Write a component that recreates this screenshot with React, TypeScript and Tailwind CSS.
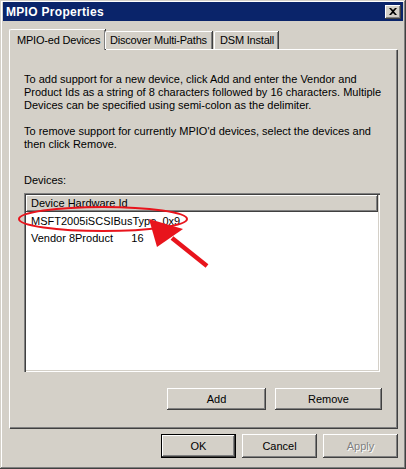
const raised = 'shadow-[inset_-1px_-1px_#404040,inset_1px_1px_#ffffff,inset_-2px_-2px_#808080]';

function Btn({ label, className = '', disabled = false, def = false }: { label: string; className?: string; disabled?: boolean; def?: boolean }) {
    return (
        <div className={`flex items-center justify-center bg-[#d4d0c8] ${def ? 'border border-black ' : ''}${className}`}>
            <div className={`w-full h-full flex items-center justify-center ${raised}`}>
                {disabled ? (
                    <span className="text-[#808080] [text-shadow:1px_1px_0_#ffffff]">{label}</span>
                ) : (
                    <span>{label}</span>
                )}
            </div>
        </div>
    );
}

export default function App() {
    return (
        <div className="w-[406px] h-[469px] bg-[#d4d0c8] relative text-[11px] text-black font-['Liberation_Sans',Arial,sans-serif] shadow-[inset_-1px_-1px_#404040,inset_1px_1px_#d4d0c8,inset_-2px_-2px_#808080,inset_2px_2px_#ffffff] pt-[2px] px-[3px] leading-none whitespace-nowrap">
            {/* Title bar */}
            <div className="h-[19px] bg-[#0a246a] flex items-center justify-between pl-[3px] pr-[2px]">
                <span className="text-white font-bold text-[12px] tracking-[0.3px]">MPIO Properties</span>
                <div className={`w-[16px] h-[14px] bg-[#d4d0c8] flex items-center justify-center ${raised}`}>
                    <svg width="8" height="7" viewBox="0 0 8 7">
                        <path d="M0 0h2l2 2 2-2h2L5 3.5 8 7H6L4 5 2 7H0l3-3.5z" fill="#000" />
                    </svg>
                </div>
            </div>

            <div className="px-[6px] pt-[8px]">
                {/* Tabs */}
                <div className="flex items-end h-[20px] relative z-10 tracking-[-0.2px]">
                    <div className="w-[96px] h-[21px] -mb-[1px] bg-[#d4d0c8] border-l border-t border-white rounded-tl-[2px] shadow-[inset_-1px_0_#808080,1px_0_#404040] flex items-start pl-[7px] pt-[5px]">
                        MPIO-ed Devices
                    </div>
                    <div className="w-[107px] h-[18px] border-l border-t border-white rounded-tl-[2px] shadow-[inset_-1px_0_#808080,1px_0_#404040] flex items-center pl-[4px]">
                        Discover Multi-Paths
                    </div>
                    <div className="w-[64px] ml-[2px] h-[18px] border-l border-t border-white rounded-tl-[2px] shadow-[inset_-1px_0_#808080,1px_0_#404040] flex items-center pl-[5px]">
                        DSM Install
                    </div>
                </div>

                {/* Panel */}
                <div className="h-[379px] w-[388px] border-l border-t border-white shadow-[inset_-1px_-1px_#808080,1px_1px_#404040] pl-[14px] pr-[17px] pt-[23px] flex flex-col">
                    <p className="leading-[13px]">
                        To add support for a new device, click Add and enter the Vendor and<br />
                        Product Ids as a string of 8 characters followed by 16 characters. Multiple<br />
                        Devices can be specified using semi-colon as the delimiter.
                    </p>
                    <p className="leading-[13px] mt-[13px]">
                        To remove support for currently MPIO'd devices, select the devices and<br />
                        then click Remove.
                    </p>
                    <div className="mt-[23px] leading-[13px]">Devices:</div>

                    {/* List */}
                    <div className="mt-[6px] h-[179px] bg-white shadow-[inset_1px_1px_#808080,inset_2px_2px_#404040,inset_-1px_-1px_#ffffff,inset_-2px_-2px_#d4d0c8] p-[2px] flex flex-col">
                        <div className={`h-[17px] bg-[#d4d0c8] flex items-center pl-[5px] ${raised}`}>Device Hardware Id</div>
                        <div className="h-[17px] flex items-center pl-[5px] mt-[1px]">MSFT2005iSCSIBusType_0x9</div>
                        <div className="h-[17px] flex items-center pl-[5px] whitespace-pre">Vendor 8Product      16</div>
                    </div>

                    <div className="flex justify-end gap-[9px] mt-[16px]">
                        <Btn label="Add" className="w-[99px] h-[22px]" />
                        <Btn label="Remove" className="w-[107px] h-[22px] -mr-[2px]" />
                    </div>
                </div>

                {/* Bottom buttons */}
                <div className="flex justify-end gap-[6px] mt-[6px] -mr-[1px]">
                    <Btn label="OK" className="w-[75px] h-[24px]" def />
                    <Btn label="Cancel" className="w-[75px] h-[24px]" />
                    <Btn label="Apply" className="w-[75px] h-[24px]" disabled />
                </div>
            </div>

            {/* Red annotation */}
            <svg className="absolute left-0 top-0 pointer-events-none" width="406" height="469">
                <ellipse cx="103" cy="219" rx="84" ry="12" fill="none" stroke="#e8141c" strokeWidth="2" />
                <line x1="207" y1="266" x2="172" y2="238" stroke="#e8141c" strokeWidth="4.5" />
                <polygon points="149,219 183,229 157,247" fill="#e8141c" />
            </svg>
        </div>
    );
}
